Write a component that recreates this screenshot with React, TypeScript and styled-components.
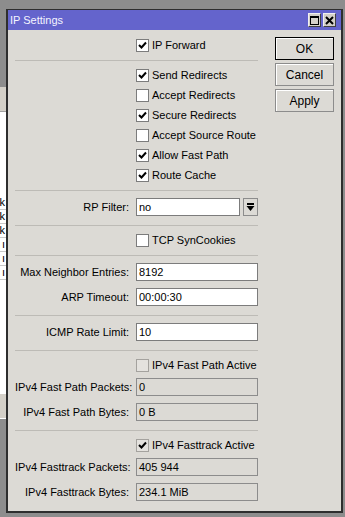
import React from 'react';
import { createGlobalStyle, styled } from 'styled-components';

const GlobalStyle = createGlobalStyle`
  body {
    margin: 0;
    background: #8d8d8d;
    font-family: 'Liberation Sans', Arial, sans-serif;
    font-size: 11px;
    color: #000;
  }
`;

const BACKDROP = [
  { h: 87, bg: '#8d8d8d' },
  { h: 24, bg: '#d4d0c8' },
  { h: 1, bg: '#a0a0a0' },
  { h: 84, bg: '#ffffff' },
];
const BACKDROP_ROWS = ['k', 'k', 'k', 'ı', 'ı', 'ı'];

const ROUTING = [
  { label: 'Send Redirects', checked: true },
  { label: 'Accept Redirects', checked: false },
  { label: 'Secure Redirects', checked: true },
  { label: 'Accept Source Route', checked: false },
  { label: 'Allow Fast Path', checked: true },
  { label: 'Route Cache', checked: true },
];

function Tick() {
  return (
    <svg width='9' height='9' viewBox='0 0 9 9'>
      <path d='M1 4 L3.5 6.5 L8 1.5' stroke='#000' strokeWidth='2' fill='none' />
    </svg>
  );
}

function Check({ label, checked, disabled }: { label: string; checked?: boolean; disabled?: boolean }) {
  return (
    <Row>
      <span />
      <CheckWrap>
        <Box $disabled={disabled}>{checked && <Tick />}</Box>
        <span>{label}</span>
      </CheckWrap>
    </Row>
  );
}

function Field({ label, value, readOnly }: { label: string; value: string; readOnly?: boolean }) {
  return (
    <FieldRow>
      <Label>{label}:</Label>
      <Input $readOnly={readOnly}>{value}</Input>
    </FieldRow>
  );
}

export default function App() {
  return (
    <>
      <GlobalStyle />
      <Screen>
        <Backdrop>
          {BACKDROP.map((b, i) => (
            <Band key={i} $h={b.h} $bg={b.bg} />
          ))}
          {BACKDROP_ROWS.map((c, i) => (
            <BackdropCell key={i}>{c}</BackdropCell>
          ))}
          <Band $h={114} $bg='#ffffff' />
          <Band $h={24} $bg='#d4d0c8' />
          <Band $h={1} $bg='#ffffff' />
          <Band $h={100} $bg='#8d8d8d' />
        </Backdrop>

        <Window>
          <TitleBar>
            <Title>IP Settings</Title>
            <WinButtons>
              <WinButton>
                <svg width='9' height='9' viewBox='0 0 9 9'>
                  <rect x='0.5' y='0.5' width='8' height='8' fill='none' stroke='#000' />
                  <rect x='0' y='0' width='9' height='2' fill='#000' />
                </svg>
              </WinButton>
              <WinButton>
                <svg width='9' height='9' viewBox='0 0 9 9'>
                  <path d='M1 1 L8 8 M8 1 L1 8' stroke='#000' strokeWidth='2' />
                </svg>
              </WinButton>
            </WinButtons>
          </TitleBar>

          <Body>
            <Form>
              <Check label='IP Forward' checked />
              <Sep />
              {ROUTING.map(r => (
                <Check key={r.label} label={r.label} checked={r.checked} />
              ))}
              <Sep />
              <FieldRow>
                <Label>RP Filter:</Label>
                <SelectWrap>
                  <Input>no</Input>
                  <DropButton>
                    <svg width='9' height='9' viewBox='0 0 9 9'>
                      <rect x='1' y='0' width='7' height='2' fill='#000' />
                      <path d='M0.5 3 L8.5 3 L4.5 8 Z' fill='#000' />
                    </svg>
                  </DropButton>
                </SelectWrap>
              </FieldRow>
              <Sep />
              <Check label='TCP SynCookies' />
              <Sep />
              <Field label='Max Neighbor Entries' value='8192' />
              <Field label='ARP Timeout' value='00:00:30' />
              <Sep />
              <Field label='ICMP Rate Limit' value='10' />
              <Sep />
              <Check label='IPv4 Fast Path Active' disabled />
              <Field label='IPv4 Fast Path Packets' value='0' readOnly />
              <Field label='IPv4 Fast Path Bytes' value='0 B' readOnly />
              <Sep />
              <Check label='IPv4 Fasttrack Active' checked disabled />
              <Field label='IPv4 Fasttrack Packets' value='405 944' readOnly />
              <Field label='IPv4 Fasttrack Bytes' value='234.1 MiB' readOnly />
            </Form>

            <Actions>
              <Button $primary>OK</Button>
              <Button>Cancel</Button>
              <Button>Apply</Button>
            </Actions>
          </Body>
        </Window>
      </Screen>
    </>
  );
}

const Screen = styled.div`
  display: flex;
  width: 345px;
  height: 517px;
  overflow: hidden;
  background: #8d8d8d;
`;

const Backdrop = styled.div`
  display: flex;
  flex-direction: column;
  width: 6px;
  flex-shrink: 0;
  overflow: hidden;
`;

const Band = styled.div<{ $h: number; $bg: string }>`
  height: ${({ $h }) => $h}px;
  background: ${({ $bg }) => $bg};
  flex-shrink: 0;
`;

const BackdropCell = styled.div`
  height: 13px;
  flex-shrink: 0;
  background: #fff;
  border-bottom: 1px solid #c8c8c8;
  display: flex;
  justify-content: flex-end;
  align-items: center;
  line-height: 13px;
  font-size: 11px;
  padding-right: 1px;
`;

const Window = styled.div`
  margin-top: 9px;
  width: 337px;
  height: 504px;
  flex-shrink: 0;
  box-sizing: border-box;
  display: flex;
  flex-direction: column;
  background: #dcdad5;
  border: 2px solid #2e2e2e;
  border-top-width: 1px;
`;

const TitleBar = styled.div`
  height: 20px;
  display: flex;
  align-items: center;
  justify-content: space-between;
  background: #6464cc;
  padding: 0 5px 0 2px;
`;

const Title = styled.span`
  color: #f4f4ff;
  font-size: 11px;
`;

const WinButtons = styled.div`
  display: flex;
  gap: 2px;
`;

const WinButton = styled.div`
  width: 13px;
  height: 14px;
  box-sizing: border-box;
  display: flex;
  align-items: center;
  justify-content: center;
  background: #d4d0c8;
  border: 1px solid #404040;
  border-top-color: #f0f0f0;
  border-left-color: #f0f0f0;
`;

const Body = styled.div`
  display: flex;
  align-items: flex-start;
  gap: 17px;
  padding: 5px 7px 0 7px;
`;

const Form = styled.div`
  width: 243px;
  display: flex;
  flex-direction: column;
`;

const Row = styled.div`
  height: 20px;
  display: grid;
  grid-template-columns: 121px 122px;
  align-items: center;
`;

const FieldRow = styled.div`
  height: 25px;
  display: grid;
  grid-template-columns: 121px 122px;
  align-items: start;
  padding-top: 3px;
  box-sizing: border-box;
`;

const Label = styled.span`
  text-align: right;
  padding-right: 7px;
  line-height: 18px;
  white-space: nowrap;
`;

const CheckWrap = styled.label`
  display: flex;
  align-items: center;
  gap: 3px;
  white-space: nowrap;
`;

const Box = styled.span<{ $disabled?: boolean }>`
  width: 13px;
  height: 13px;
  box-sizing: border-box;
  display: flex;
  align-items: center;
  justify-content: center;
  background: ${({ $disabled }) => ($disabled ? '#e4e2de' : '#fff')};
  border: 1px solid ${({ $disabled }) => ($disabled ? '#a4a29e' : '#7c7c7c')};
`;

const Input = styled.div<{ $readOnly?: boolean }>`
  flex: 1;
  height: 18px;
  box-sizing: border-box;
  padding-left: 2px;
  line-height: 16px;
  background: ${({ $readOnly }) => ($readOnly ? 'transparent' : '#fff')};
  border: 1px solid ${({ $readOnly }) => ($readOnly ? '#8c8c8c' : '#7c7c7c')};
  overflow: hidden;
  white-space: nowrap;
`;

const SelectWrap = styled.div`
  display: flex;
  gap: 3px;
`;

const DropButton = styled.div`
  width: 15px;
  height: 18px;
  box-sizing: border-box;
  display: flex;
  align-items: center;
  justify-content: center;
  background: #dcdad5;
  border: 1px solid #8c8c8c;
`;

const Sep = styled.div`
  height: 1px;
  margin: 5px 0 4px;
  background: #bdbbb6;
`;

const Actions = styled.div`
  width: 59px;
  margin-top: 2px;
  display: flex;
  flex-direction: column;
  gap: 3px;
`;

const Button = styled.div<{ $primary?: boolean }>`
  height: 23px;
  box-sizing: border-box;
  display: flex;
  align-items: center;
  justify-content: center;
  font-size: 12px;
  background: #dcdad5;
  border: 1px solid ${({ $primary }) => ($primary ? '#000' : '#8c8c8c')};
  box-shadow: inset 1px 1px 0 #fff;
`;
